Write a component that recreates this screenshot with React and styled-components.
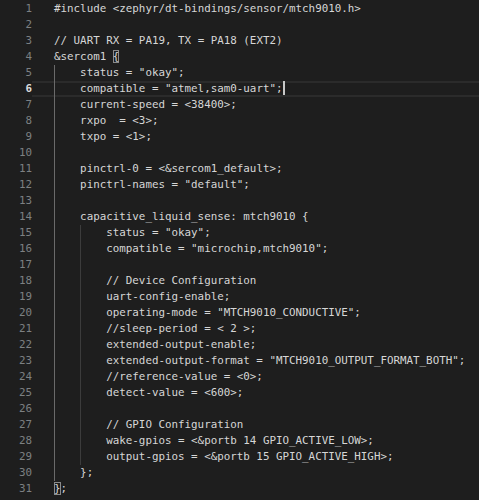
import React from "react";
import styled, { createGlobalStyle } from "styled-components";

const Global = createGlobalStyle`
  html, body { margin: 0; padding: 0; background: #1e1e1e; }
  #root { background: #1e1e1e; min-height: 500px; }
`;

const Editor = styled.div`
  display: flex;
  flex-direction: column;
  padding-top: 1px;
  width: 479px;
  height: 500px;
  overflow: hidden;
  background: #1e1e1e;
  font-family: "DejaVu Sans Mono", "Liberation Mono", monospace;
  font-size: 10.85px;
  color: #d6d6d6;
`;

const Row = styled.div`
  display: flex;
  height: 16px;
  line-height: 16px;
  flex: none;
`;

const LineNo = styled.div`
  width: 32px;
  flex: none;
  text-align: right;
  color: ${(p) => (p.$active ? "#dcdcdc" : "#7d8082")};
  font-weight: ${(p) => (p.$active ? "bold" : "normal")};
`;

const Code = styled.div`
  flex: 1;
  padding-left: 22px;
  white-space: pre;
  box-shadow: ${(p) =>
    p.$active ? "inset 0 2px #2b2b2b, inset 0 -2px #2b2b2b" : "none"};
`;

const Guide = styled.span`
  display: inline-block;
  width: 4ch;
  height: 16px;
  vertical-align: top;
  box-shadow: inset 1px 0 ${(p) => (p.$active ? "#6a6a6a" : "#3c3c3c")};
`;

const Bracket = styled.span`
  box-shadow: inset 0 0 0 1px #8a8a8a;
`;

const Caret = styled.span`
  display: inline-block;
  width: 0;
  height: 14px;
  vertical-align: -3px;
  border-left: 2px solid #c8c8c8;
`;

const lines = [
  [0, "#include <zephyr/dt-bindings/sensor/mtch9010.h>"],
  [0, ""],
  [0, "// UART RX = PA19, TX = PA18 (EXT2)"],
  [0, [["t", "&sercom1 "], ["b", "{"]]],
  [1, 'status = "okay";'],
  [1, [["t", 'compatible = "atmel,sam0-uart";'], ["c"]]],
  [1, "current-speed = <38400>;"],
  [1, "rxpo  = <3>;"],
  [1, "txpo = <1>;"],
  [1, ""],
  [1, "pinctrl-0 = <&sercom1_default>;"],
  [1, 'pinctrl-names = "default";'],
  [1, ""],
  [1, "capacitive_liquid_sense: mtch9010 {"],
  [2, 'status = "okay";'],
  [2, 'compatible = "microchip,mtch9010";'],
  [2, ""],
  [2, "// Device Configuration"],
  [2, "uart-config-enable;"],
  [2, 'operating-mode = "MTCH9010_CONDUCTIVE";'],
  [2, "//sleep-period = < 2 >;"],
  [2, "extended-output-enable;"],
  [2, 'extended-output-format = "MTCH9010_OUTPUT_FORMAT_BOTH";'],
  [2, "//reference-value = <0>;"],
  [2, "detect-value = <600>;"],
  [2, ""],
  [2, "// GPIO Configuration"],
  [2, "wake-gpios = <&portb 14 GPIO_ACTIVE_LOW>;"],
  [2, "output-gpios = <&portb 15 GPIO_ACTIVE_HIGH>;"],
  [1, "};"],
  [0, [["b", "}"], ["t", ";"]]],
];

function renderText(t) {
  if (typeof t === "string") return t;
  return t.map((seg, i) => {
    if (seg[0] === "b") return <Bracket key={i}>{seg[1]}</Bracket>;
    if (seg[0] === "c") return <Caret key={i} />;
    return <React.Fragment key={i}>{seg[1]}</React.Fragment>;
  });
}

export default function App() {
  return (
    <>
      <Global />
      <Editor>
        {lines.map(([level, text], i) => {
          const n = i + 1;
          const active = n === 6;
          return (
            <Row key={n}>
              <LineNo $active={active}>{n}</LineNo>
              <Code $active={active}>
                {Array.from({ length: level }).map((_, g) => (
                  <Guide key={g} $active={g === 0} />
                ))}
                {renderText(text)}
              </Code>
            </Row>
          );
        })}
      </Editor>
    </>
  );
}
